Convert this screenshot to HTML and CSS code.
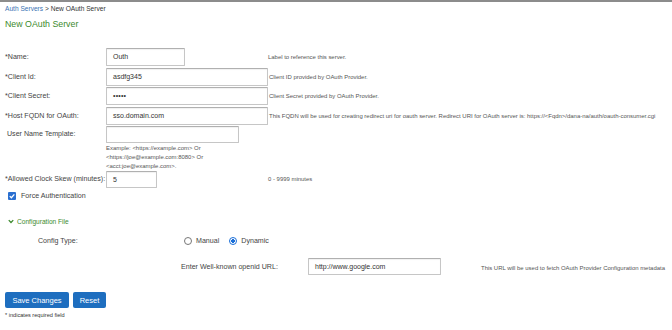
FILE: index.html
```html
<!DOCTYPE html>
<html>
<head>
<meta charset="utf-8">
<link rel="stylesheet" href="styles.css">
</head>
<body>
<div class="topbar"></div>
<div class="page">
  <div class="crumb"><a class="crumb-link">Auth Servers</a> &gt; New OAuth Server</div>
  <h1 class="title">New OAuth Server</h1>

  <div class="form">
    <div class="row r1">
      <label class="lbl">*Name:</label>
      <div class="field"><div class="input w-name">Outh</div></div>
      <div class="help">Label to reference this server.</div>
    </div>
    <div class="row r2">
      <label class="lbl">*Client Id:</label>
      <div class="field"><div class="input w-long">asdfg345</div></div>
      <div class="help">Client ID provided by OAuth Provider.</div>
    </div>
    <div class="row r3">
      <label class="lbl">*Client Secret:</label>
      <div class="field"><div class="input w-long dots">&#8226;&#8226;&#8226;&#8226;&#8226;</div></div>
      <div class="help">Client Secret provided by OAuth Provider.</div>
    </div>
    <div class="row r4">
      <label class="lbl">*Host FQDN for OAuth:</label>
      <div class="field"><div class="input w-long">sso.domain.com</div></div>
      <div class="help nowrap">This FQDN will be used for creating redirect uri for oauth server. Redirect URI for OAuth server is: https://&lt;Fqdn&gt;/dana-na/auth/oauth-consumer.cgi</div>
    </div>
    <div class="row r5">
      <label class="lbl indent">User Name Template:</label>
      <div class="field">
        <div class="input w-tpl short"></div>
        <div class="example">Example: &lt;https://example.com&gt; Or<br>&lt;https://joe@example.com:8080&gt; Or<br>&lt;acct:joe@example.com&gt;.</div>
      </div>
      <div class="help"></div>
    </div>
    <div class="row r6">
      <label class="lbl">*Allowed Clock Skew (minutes):</label>
      <div class="field"><div class="input w-skew short">5</div></div>
      <div class="help">0 - 9999 minutes</div>
    </div>
  </div>

  <div class="check-row">
    <span class="checkbox"><svg viewBox="0 0 10 10" width="8" height="8"><path d="M2.2 5.2 L4.2 7.2 L7.9 3" fill="none" stroke="#fff" stroke-width="1.6"/></svg></span>
    <span class="check-label">Force Authentication</span>
  </div>

  <div class="section-head">
    <svg class="chev" viewBox="0 0 8 6" width="6" height="5"><path d="M1 1.2 L4 4.4 L7 1.2" fill="none" stroke="#3c8a2e" stroke-width="1.7"/></svg>
    <span>Configuration File</span>
  </div>

  <div class="cfg-type">
    <span class="cfg-label">Config Type:</span>
    <span class="radio"></span><span class="radio-text">Manual</span>
    <span class="radio on"></span><span class="radio-text">Dynamic</span>
  </div>

  <div class="cfg-url">
    <span class="url-label">Enter Well-known openid URL:</span>
    <div class="input w-url short">http://www.google.com</div>
    <span class="help url-help">This URL will be used to fetch OAuth Provider Configuration metadata</span>
  </div>

  <div class="buttons">
    <button class="btn btn-save">Save Changes</button>
    <button class="btn btn-reset">Reset</button>
  </div>
  <div class="req">* indicates required field</div>
</div>
</body>
</html>
```

FILE: styles.css
```css
html, body {
  margin: 0;
  padding: 0;
  background: #fff;
  font-family: "Liberation Sans", Arial, sans-serif;
  color: #3a3a3a;
  overflow: hidden;
}
.topbar {
  height: 2px;
  background: #8c8c8c;
}
.page {
  padding-left: 5px;
}
.crumb {
  margin-top: 1px;
  font-size: 6.6px;
  line-height: 11px;
  color: #333;
}
.crumb-link {
  color: #3a74b4;
}
.title {
  margin: 4px 0 0 0;
  font-size: 8.8px;
  line-height: 12px;
  font-weight: normal;
  color: #3c8a2e;
}
.form {
  margin-top: 18px;
  display: grid;
  grid-template-columns: 101px 162px 1fr;
  row-gap: 1.5px;
}
.row {
  display: contents;
}
.lbl {
  font-size: 7.1px;
  color: #444;
  height: 18px;
  line-height: 18px;
  white-space: nowrap;
}
.indent {
  padding-left: 2px;
}
.field {
  display: flex;
  flex-direction: column;
}
.input {
  box-sizing: border-box;
  height: 18px;
  border: 1px solid #c6c6c6;
  border-top-color: #b0b0b0;
  border-radius: 1px;
  box-shadow: inset 0 1px 1px rgba(0,0,0,0.06);
  background: #fff;
  font-size: 7px;
  line-height: 16px;
  padding-left: 6px;
  color: #333;
  white-space: nowrap;
}
.input.short {
  height: 17px;
  line-height: 15px;
}
.dots {
  font-size: 7px;
  letter-spacing: 0.2px;
}
.w-name { width: 79px; }
.w-long { width: 162px; }
.w-tpl { width: 133px; }
.w-skew { width: 51px; }
.w-url { width: 133px; }
.help {
  font-size: 5.95px;
  color: #555;
  height: 18px;
  line-height: 18px;
  padding-left: 1px;
  white-space: nowrap;
}
.r1 .help { padding-left: 0; }
.r5 .lbl, .r5 .help, .r6 .lbl, .r6 .help { height: 17px; line-height: 17px; }
.example {
  font-size: 5.95px;
  color: #555;
  line-height: 9px;
  margin-top: 0.5px;
  margin-bottom: -1.5px;
  white-space: nowrap;
}
.r5 .lbl { align-self: start; }
.r6 .help { padding-left: 0; }

.check-row {
  display: flex;
  align-items: center;
  margin-top: 2px;
  height: 12px;
  padding-left: 3px;
}
.checkbox {
  width: 8px;
  height: 8px;
  border-radius: 1px;
  background: #2a6fd0;
  display: flex;
  align-items: center;
  justify-content: center;
}
.check-label {
  font-size: 7.1px;
  color: #444;
  margin-left: 5px;
}
.section-head {
  display: flex;
  align-items: center;
  margin-top: 14.5px;
  padding-left: 3px;
  height: 10px;
  font-size: 6.6px;
  color: #3c8a2e;
}
.chev {
  margin-right: 3px;
}
.cfg-type {
  display: flex;
  align-items: center;
  margin-top: 9px;
  height: 12px;
  padding-left: 33px;
  font-size: 7.1px;
  color: #444;
}
.cfg-label {
  width: 146px;
}
.radio {
  box-sizing: border-box;
  width: 8px;
  height: 8px;
  border-radius: 50%;
  border: 1px solid #777;
  display: inline-block;
}
.radio.on {
  border: 1.3px solid #1a6ed8;
  background: radial-gradient(circle, #1a6ed8 0 1.8px, #fff 2.1px);
}
.radio-text {
  margin-left: 4px;
  margin-right: 10px;
}
.cfg-url {
  display: flex;
  align-items: center;
  margin-top: 11px;
  padding-left: 176px;
  height: 17px;
}
.url-label {
  width: 127px;
  font-size: 7.1px;
  color: #444;
}
.url-help {
  margin-left: 40px;
  height: auto;
  line-height: 10px;
  padding-left: 0;
  margin-top: 2px;
}
.buttons {
  display: flex;
  gap: 4px;
  margin-top: 17px;
}
.btn {
  height: 16px;
  border: none;
  border-radius: 2px;
  background: #1e6ebf;
  color: #fff;
  font-family: "Liberation Sans", Arial, sans-serif;
  font-size: 7.5px;
  padding: 0;
  cursor: pointer;
}
.btn-save { width: 64px; }
.btn-reset { width: 33px; }
.req {
  font-size: 5.6px;
  color: #333;
  margin-top: 3px;
  line-height: 9px;
}
```
